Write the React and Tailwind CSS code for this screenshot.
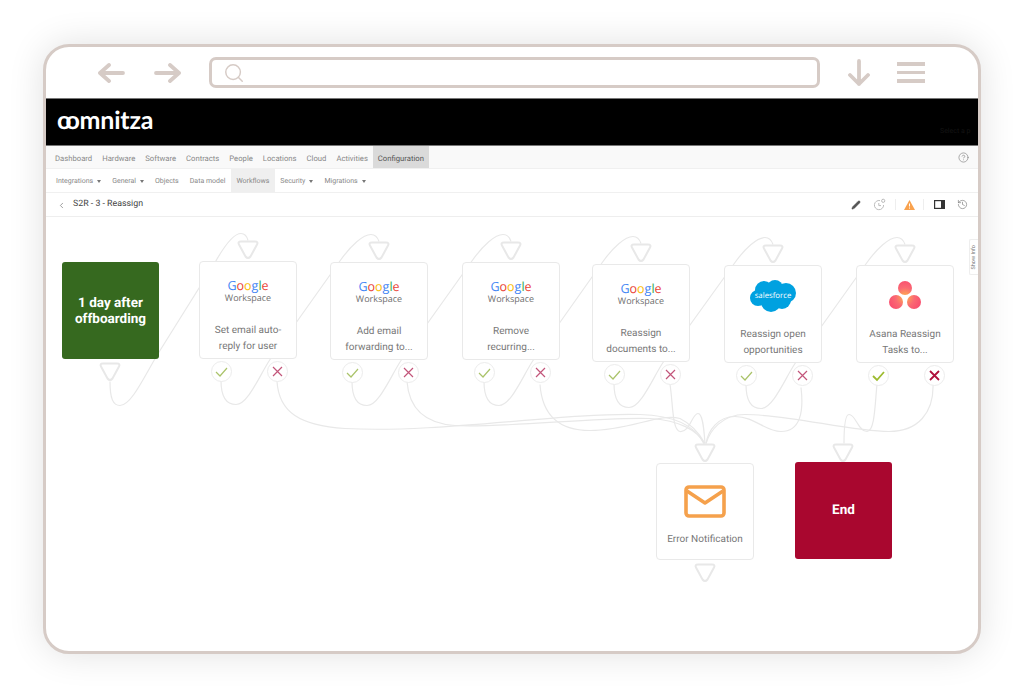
import React from 'react';
import { Search, ChevronLeft, Pencil, History, CircleHelp } from 'lucide-react';

const mainNav = ['Dashboard', 'Hardware', 'Software', 'Contracts', 'People', 'Locations', 'Cloud', 'Activities', 'Configuration'];
const subNav = [
  { label: 'Integrations', caret: true },
  { label: 'General', caret: true },
  { label: 'Objects' },
  { label: 'Data model' },
  { label: 'Workflows' },
  { label: 'Security', caret: true },
  { label: 'Migrations', caret: true },
];

// page coordinates, the canvas offsets them when placing
const tasks = [
  { x: 199, y: 261, logo: 'google', text: ['Set email auto-', 'reply for user'] },
  { x: 330, y: 262, logo: 'google', text: ['Add email', 'forwarding to...'] },
  { x: 462, y: 262, logo: 'google', text: ['Remove', 'recurring...'] },
  { x: 592, y: 264, logo: 'google', text: ['Reassign', 'documents to...'] },
  { x: 724, y: 265, logo: 'salesforce', text: ['Reassign open', 'opportunities'] },
  { x: 856, y: 265, logo: 'asana', text: ['Asana Reassign', 'Tasks to...'] },
];

const CANVAS_X = 46;
const CANVAS_Y = 217;

const Triangle = ({ cx, y }) => (
  <path
    d={`M${cx - 7} ${y + 1} H${cx + 7} Q${cx + 10.5} ${y + 1} ${cx + 9} ${y + 4} L${cx + 2.5} ${y + 16} Q${cx} ${y + 19} ${cx - 2.5} ${y + 16} L${cx - 9} ${y + 4} Q${cx - 10.5} ${y + 1} ${cx - 7} ${y + 1} Z`}
    fill="#fff"
    stroke="#e8e8e8"
    strokeWidth="2"
  />
);

const nextLink = (cx, cy, tx, ty) =>
  `M${cx} ${cy + 10} C${cx} ${cy + 26} ${cx + 5} ${cy + 34} ${cx + 15} ${cy + 34} C${cx + 27} ${cy + 34} ${cx + 39} ${cy + 4} ${cx + 49} ${cy - 11} L${tx - 38} ${ty + 18} C${tx - 28} ${ty + 4} ${tx - 16} ${ty - 7} ${tx - 8} ${ty - 7} C${tx - 3} ${ty - 7} ${tx - 1} ${ty - 3} ${tx} ${ty}`;

const Connectors = () => (
  <svg className="absolute inset-0 w-full h-full" viewBox={`${CANVAS_X} ${CANVAS_Y} 932 433`} fill="none">
    <g stroke="#e8e8e8" strokeWidth="1.2">
      <path d="M110 381 C110 398 113 405 120 405 C132 405 146 372 160 350 L215 262 C224 246 234 233 241 233 C245 233 247 236 248 240" />
      {tasks.slice(0, -1).map((t, i) => (
        <path key={t.x} d={nextLink(t.x + 22, t.y + 109, tasks[i + 1].x + 49, tasks[i + 1].y - 21)} />
      ))}
      <path d="M277 381 C279 412 300 425 345 428 C440 433 560 412 640 414 C675 415 695 425 704 443" />
      <path d="M407 381 C409 408 425 423 455 425 C500 428 600 416 650 418 C680 420 698 430 704 443" />
      <path d="M540 384 C542 412 556 430 590 430 C630 430 660 412 680 418 C692 424 700 434 705 443" />
      <path d="M670 384 C673 402 672 430 680 431 C690 432 692 413 698 413 C703 413 704 430 705 443" />
      <path d="M801 387 C804 412 800 431 781 431 C765 431 755 416 735 416 C718 416 708 430 706 443" />
      <path d="M877 384 C875 402 875 431 867 431 C858 431 856 414 849 414 C845 414 844 430 844 443" />
      <path d="M933 384 C934 412 918 431 889 431 C850 431 790 414 745 414 C722 414 710 430 706 443" />
    </g>
    <Triangle cx={110} y={362} />
    {tasks.map((t) => <Triangle key={t.x} cx={t.x + 49} y={t.y - 21} />)}
    <Triangle cx={705} y={443} />
    <Triangle cx={843} y={443} />
    <Triangle cx={705} y={563} />
  </svg>
);

const GoogleLogo = () => (
  <div className="flex flex-col items-center font-['Open_Sans',sans-serif] leading-none">
    <div className="text-[12.5px] h-[12px] leading-[12px] font-medium">
      <span className="text-[#4285f4]">G</span>
      <span className="text-[#ea4335]">o</span>
      <span className="text-[#fbbc05]">o</span>
      <span className="text-[#4285f4]">g</span>
      <span className="text-[#34a853]">l</span>
      <span className="text-[#ea4335]">e</span>
    </div>
    <div className="text-[9px] leading-[10px] mt-[1px] text-[#6f6f6f]">Workspace</div>
  </div>
);

const SalesforceLogo = () => (
  <svg width="48" height="34" viewBox="0 0 48 34">
    <g fill="#00a1e0">
      <circle cx="15" cy="11" r="9" />
      <circle cx="26" cy="9" r="8" />
      <circle cx="37" cy="14" r="10" />
      <circle cx="9" cy="19" r="8" />
      <circle cx="22" cy="23" r="10" />
      <circle cx="33" cy="21" r="9" />
    </g>
    <text x="24" y="19" textAnchor="middle" fill="#fff" fontSize="7.8" fontFamily="Open Sans, sans-serif">salesforce</text>
  </svg>
);

const AsanaLogo = () => (
  <svg width="34" height="32" viewBox="0 0 34 32">
    <defs>
      <radialGradient id="asana" gradientUnits="userSpaceOnUse" cx="17" cy="17" r="17">
        <stop offset="0" stopColor="#ffb54a" />
        <stop offset="0.55" stopColor="#fa6a73" />
        <stop offset="1" stopColor="#f94f6f" />
      </radialGradient>
    </defs>
    <g fill="url(#asana)">
      <circle cx="17" cy="8" r="7" />
      <circle cx="8" cy="22" r="7" />
      <circle cx="26" cy="22" r="7" />
    </g>
  </svg>
);

const TaskNode = ({ x, y, logo, text }) => (
  <div
    className="absolute w-[98px] h-[98px] bg-white border-[1.5px] border-[#e9e9e9] rounded-[4px] flex flex-col items-center"
    style={{ left: x - CANVAS_X, top: y - CANVAS_Y }}
  >
    <div className="h-[52px] flex items-center justify-center pt-[7px]">
      {logo === 'google' && <GoogleLogo />}
      {logo === 'salesforce' && <SalesforceLogo />}
      {logo === 'asana' && <AsanaLogo />}
    </div>
    <div className="mt-[9px] text-[10px] leading-[16px] text-[#777] text-center">
      {text.map((line) => <div key={line}>{line}</div>)}
    </div>
  </div>
);

const Outcome = ({ x, y, ok, strong }) => (
  <div
    className="absolute w-[21px] h-[21px] rounded-full bg-white border-[1.5px] border-[#ececec] flex items-center justify-center"
    style={{ left: x - 10 - CANVAS_X, top: y - 10 - CANVAS_Y }}
  >
    <svg width="13" height="13" viewBox="0 0 13 13" fill="none" strokeWidth={strong ? 1.8 : 1.2}>
      {ok
        ? <path d="M1 7 L5 11 L12 3" stroke={strong ? '#9dbb2f' : '#aac36a'} />
        : <path d="M2 2 L11 11 M11 2 L2 11" stroke={strong ? '#b0103c' : '#c2557a'} />}
    </svg>
  </div>
);

const Caret = () => <span className="ml-[4px] w-0 h-0 border-x-[2.5px] border-x-transparent border-t-[3px] border-t-[#777]" />;

export default function App() {
  return (
    <div className="w-[1024px] h-[698px] bg-white overflow-hidden pl-[43px] pt-[44px] font-['Roboto',sans-serif] [text-rendering:geometricPrecision]">
      <div className="w-[938px] h-[610px] bg-white border-[3px] border-[#d6cbc6] rounded-[26px] overflow-hidden flex flex-col shadow-[0_0_36px_rgba(0,0,0,0.12)]">
        {/* browser chrome */}
        <div className="h-[51px] shrink-0 flex items-center pl-[52px]">
          <svg width="27" height="20" viewBox="0 0 27 20" fill="none" stroke="#d6cbc6" strokeWidth="3.8" strokeLinecap="round" strokeLinejoin="round">
            <path d="M2 10 H25 M11 2 L2 10 L11 18" />
          </svg>
          <svg className="ml-[29px]" width="27" height="20" viewBox="0 0 27 20" fill="none" stroke="#d6cbc6" strokeWidth="3.8" strokeLinecap="round" strokeLinejoin="round">
            <path d="M2 10 H25 M16 2 L25 10 L16 18" />
          </svg>
          <div className="ml-[28px] w-[611px] h-[31px] border-[3px] border-[#d6cbc6] rounded-[7px] flex items-center pl-[11px]">
            <Search size={22} strokeWidth={1.6} color="#d6cbc6" />
          </div>
          <svg className="ml-[28px]" width="22" height="28" viewBox="0 0 22 28" fill="none" stroke="#d6cbc6" strokeWidth="3.8" strokeLinecap="round" strokeLinejoin="round">
            <path d="M11 2 V25 M2 16 L11 25 L20 16" />
          </svg>
          <div className="ml-[27px] w-[28px] flex flex-col gap-[5px]">
            <div className="h-[3.5px] bg-[#d6cbc6]" />
            <div className="h-[3.5px] bg-[#d6cbc6]" />
            <div className="h-[3.5px] bg-[#d6cbc6]" />
          </div>
        </div>

        {/* brand bar */}
        <div className="h-[48px] shrink-0 bg-black border-y border-[#777] flex items-center justify-between pl-[11px] relative">
          <div className="text-white text-[25px] font-['Lato',sans-serif] font-bold leading-none tracking-[-0.2px] mb-[3px]">
            <span className="tracking-[-6px]">o</span>omnitza
          </div>
          <span className="absolute right-0 top-[27px] text-[7px] text-[#141414] whitespace-nowrap w-[38px] overflow-hidden">Select a p</span>
        </div>

        {/* main nav */}
        <div className="h-[23px] shrink-0 bg-[#f9f9f9] flex items-stretch justify-between border-b border-[#f0f0f0] pl-[4px] pr-[9px]">
          <div className="flex items-stretch">
            {mainNav.map((item) => (
              <div
                key={item}
                className={`px-[5px] pt-[3px] flex items-center text-[7.7px] ${item === 'Configuration' ? 'bg-[#dadada] text-[#555]' : 'text-[#888]'}`}
              >
                {item}
              </div>
            ))}
          </div>
          <div className="flex items-center">
            <CircleHelp size={11} strokeWidth={1.5} color="#888" />
          </div>
        </div>

        {/* sub nav */}
        <div className="h-[24px] shrink-0 flex items-stretch border-b border-[#f0f0f0] pl-[4.5px]">
          {subNav.map((item) => (
            <div
              key={item.label}
              className={`px-[5.5px] pt-[1px] flex items-center text-[7px] text-[#888] ${item.label === 'Workflows' ? 'bg-[#efefef]' : ''}`}
            >
              {item.label}
              {item.caret && <Caret />}
            </div>
          ))}
        </div>

        {/* breadcrumb + actions */}
        <div className="h-[24px] shrink-0 flex items-center justify-between border-b border-[#eeeeee] pl-[11px] pr-[10px]">
          <div className="flex items-center pt-[1px] text-[8.8px] text-[#444]">
            <ChevronLeft size={9} strokeWidth={1.5} color="#555" />
            <span className="ml-[7px]">S2R - 3 - Reassign</span>
          </div>
          <div className="flex items-center">
            <Pencil size={10} color="#555" fill="#555" strokeWidth={1} />
            <svg className="ml-[12px]" width="13" height="13" viewBox="0 0 13 13" fill="none" stroke="#bbb" strokeWidth="1">
              <path d="M7 2.6 A4.6 4.6 0 1 0 10.6 7 M5.8 5 V7.6 H8" />
              <circle cx="10.2" cy="2.8" r="1.6" />
            </svg>
            <div className="ml-[9px] h-[11px] w-px bg-[#eee]" />
            <svg className="ml-[8px]" width="11" height="10" viewBox="0 0 11 10">
              <path d="M5.5 0 L11 10 H0 Z" fill="#f9a24e" />
              <path d="M5.5 3.5 V6.5 M5.5 7.5 V8.6" stroke="#fff" strokeWidth="1" />
            </svg>
            <div className="ml-[8px] h-[11px] w-px bg-[#eee]" />
            <svg className="ml-[10px]" width="11" height="9" viewBox="0 0 11 9" fill="none">
              <rect x="0.6" y="0.6" width="9.8" height="7.8" stroke="#333" strokeWidth="1.2" />
              <rect x="7" y="1" width="3" height="7" fill="#333" />
            </svg>
            <History size={11} strokeWidth={1.4} color="#777" className="ml-[12px]" />
          </div>
        </div>

        {/* workflow canvas */}
        <div className="relative flex-1">
          <Connectors />

          <div
            className="absolute w-[97px] h-[97px] bg-[#36691f] rounded-[3px] flex items-center justify-center text-center text-white font-bold text-[13.5px] leading-[16px]"
            style={{ left: 62 - CANVAS_X, top: 262 - CANVAS_Y }}
          >
            1 day after<br />offboarding
          </div>

          {tasks.map((t) => <TaskNode key={t.x} {...t} />)}

          {tasks.map((t, i) => (
            <React.Fragment key={t.x}>
              <Outcome x={t.x + 22} y={t.y + 109.5} ok strong={i === 5} />
              <Outcome x={t.x + 78} y={t.y + 109.5} strong={i === 5} />
            </React.Fragment>
          ))}

          <div
            className="absolute w-[98px] h-[97px] bg-white border-[1.5px] border-[#e9e9e9] rounded-[4px] flex flex-col items-center"
            style={{ left: 656 - CANVAS_X, top: 463 - CANVAS_Y }}
          >
            <svg className="mt-[21px]" width="42" height="33" viewBox="0 0 42 33" fill="none" stroke="#f5a14c" strokeWidth="3.6" strokeLinejoin="round">
              <rect x="2" y="2" width="38" height="29" rx="3" />
              <path d="M3 6 L21 18 L39 6" />
            </svg>
            <div className="mt-[14px] text-[10px] leading-[16px] text-[#777]">Error Notification</div>
          </div>

          <div
            className="absolute w-[97px] h-[97px] bg-[#a9072f] rounded-[3px] flex items-center justify-center text-white font-bold text-[13.5px]"
            style={{ left: 795 - CANVAS_X, top: 462 - CANVAS_Y }}
          >
            End
          </div>

          {/* collapsed info tab on the right edge */}
          <div className="absolute right-0 top-[22px] w-[9px] h-[36px] bg-white border border-r-0 border-[#eee] rounded-l-[2px] flex items-center justify-center">
            <span className="[writing-mode:vertical-rl] rotate-180 text-[5.5px] text-[#777] whitespace-nowrap">Show Info</span>
          </div>
        </div>
      </div>
    </div>
  );
}
